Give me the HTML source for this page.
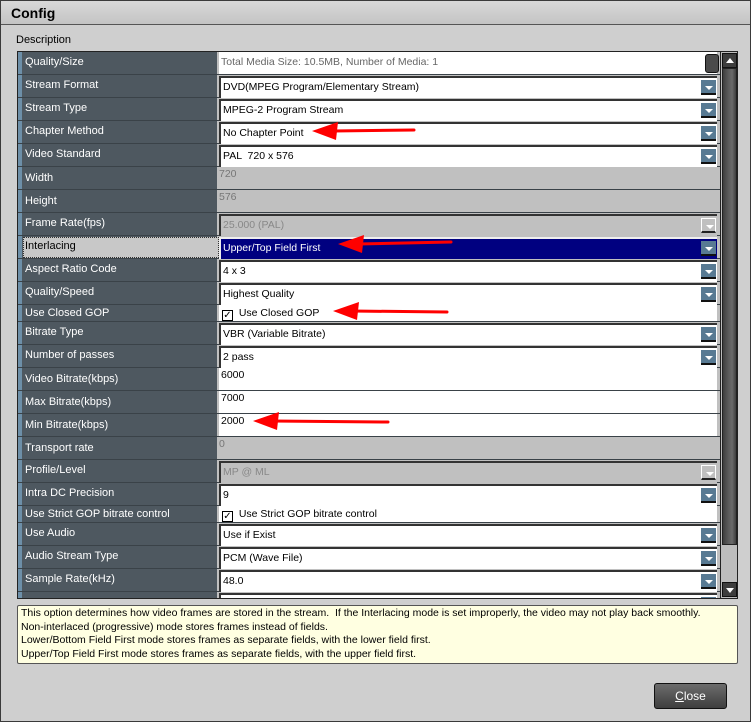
<!DOCTYPE html>
<html><head><meta charset="utf-8"><style>
*{margin:0;padding:0;box-sizing:border-box}
body{width:753px;height:724px;overflow:hidden;background:#fff;font-family:"Liberation Sans",Arial,sans-serif;font-size:10.5px;position:relative}
.win{position:absolute;left:0;top:0;width:751px;height:722px;background:#cfcfcf;border:1px solid #3a3a3a;}
.title{position:absolute;left:0;top:0;width:749px;height:24px;background:linear-gradient(#d8d8d8,#c4c4c4);border-bottom:1px solid #555;font-weight:bold;font-size:14px;padding:4px 10px}
.desc{position:absolute;left:15px;top:33px;font-size:11px}
.grid{position:absolute;left:16px;top:50px;width:721px;height:548px;background:#4e5860;border:1px solid #222;overflow:hidden}
.stripe{position:absolute;left:0;top:0;width:4px;height:548px;background:#6d8fa8}
.valcol{position:absolute;left:199px;top:0;width:503px;height:548px;background:#c0c0c0}
.r{position:absolute;left:0;width:702px;border-bottom:1px solid #3a4248}
.lab{position:absolute;left:7px;color:#fff;font-size:11px}
.v{position:absolute;left:201px;width:498px;background:#fff;border-top:2px solid #333;border-left:2px solid #333;font-size:10.5px;padding-left:2px;color:#000;white-space:nowrap}
.dd{position:absolute;right:1px;top:2px;width:15px;height:15px;background:#587a93;border-bottom:2px solid #111}
.dd:after{content:"";position:absolute;left:4px;top:6px;border-left:4px solid transparent;border-right:4px solid transparent;border-top:4px solid #fff}
.g .dd{background:#c0c0c0;border:1px solid #fff;border-bottom:2px solid #222}
.sb{position:absolute;left:702px;top:0;width:17px;height:548px;background:#bdbdbd;border-left:1px solid #222}
.thumb{position:absolute;left:1px;top:16px;width:15px;height:477px;background:linear-gradient(90deg,#3e3e3e,#5a5a5a 40%,#6a6a6a,#3e3e3e);border:1px solid #222}
.btn{position:absolute;left:1px;width:15px;height:15px;background:#3d3d3d;border:1px solid #111}
.info{position:absolute;left:16px;top:604px;width:721px;height:59px;background:#ffffe1;border:1px solid #555;border-radius:2px;padding:1px 3px;font-size:10.5px;line-height:13.5px}
.close{position:absolute;left:653px;top:682px;width:73px;height:26px;border:1px solid #111;border-radius:3px;background:linear-gradient(#6c6c6c,#3e3e3e);color:#fff;text-align:center;line-height:24px;font-size:12px}
.c{top:1px;height:22px;padding-top:3px}
</style></head><body>
<div class="win">
<div class="title">Config</div>
<div class="desc">Description</div>
<div class="grid">
<div class="valcol"></div>
<div class="stripe"></div>

<div class="r" style="top:0;height:23px"><span class="lab" style="top:4px">Quality/Size</span><div class="v" style="top:0;height:22px;border:0;color:#666;padding-top:4px">Total Media Size: 10.5MB, Number of Media: 1</div><div style="position:absolute;left:687px;top:2px;width:14px;height:19px;background:#4a4a4a;border:1px solid #111;border-radius:3px"></div></div>
<div class="r" style="top:23px;height:23px"><span class="lab" style="top:4px">Stream Format</span><div class="v c">DVD(MPEG Program/Elementary Stream)<div class="dd"></div></div></div>
<div class="r" style="top:46px;height:23px"><span class="lab" style="top:4px">Stream Type</span><div class="v c">MPEG-2 Program Stream<div class="dd"></div></div></div>
<div class="r" style="top:69px;height:23px"><span class="lab" style="top:4px">Chapter Method</span><div class="v c">No Chapter Point<div class="dd"></div></div></div>
<div class="r" style="top:92px;height:23px"><span class="lab" style="top:4px">Video Standard</span><div class="v c">PAL &nbsp;720 x 576<div class="dd"></div></div></div>
<div class="r" style="top:115px;height:23px"><span class="lab" style="top:5px">Width</span><span style="position:absolute;left:201px;top:1px;color:#777">720</span></div>
<div class="r" style="top:138px;height:23px"><span class="lab" style="top:5px">Height</span><span style="position:absolute;left:201px;top:1px;color:#777">576</span></div>
<div class="r g" style="top:161px;height:23px"><span class="lab" style="top:4px">Frame Rate(fps)</span><div class="v c" style="background:#c0c0c0;color:#888">25.000 (PAL)<div class="dd"></div></div></div>
<div class="r" style="top:184px;height:23px"><div style="position:absolute;left:5px;top:1px;width:196px;height:21px;background:#c8c8c8;border:1px dotted #333"></div><span class="lab" style="top:4px;color:#000">Interlacing</span><div class="v c" style="background:#000080;color:#fff;border-color:#eee">Upper/Top Field First<div class="dd"></div></div></div>
<div class="r" style="top:207px;height:23px"><span class="lab" style="top:4px">Aspect Ratio Code</span><div class="v c">4 x 3<div class="dd"></div></div></div>
<div class="r" style="top:230px;height:23px"><span class="lab" style="top:4px">Quality/Speed</span><div class="v c">Highest Quality<div class="dd"></div></div></div>
<div class="r" style="top:253px;height:17px"><span class="lab" style="top:2px">Use Closed GOP</span><div class="v" style="top:0;height:16px;border:0;padding-top:2px;padding-left:3px"><span style="display:inline-block;width:11px;height:11px;border:1px solid #000;font-size:10px;line-height:9px;text-align:center;vertical-align:-2px">✓</span>&nbsp;&nbsp;Use Closed GOP</div></div>
<div class="r" style="top:270px;height:23px"><span class="lab" style="top:4px">Bitrate Type</span><div class="v c">VBR (Variable Bitrate)<div class="dd"></div></div></div>
<div class="r" style="top:293px;height:23px"><span class="lab" style="top:4px">Number of passes</span><div class="v c">2 pass<div class="dd"></div></div></div>
<div class="r" style="top:316px;height:23px"><span class="lab" style="top:5px">Video Bitrate(kbps)</span><div class="v" style="top:0;height:22px;border:0;padding-top:1px">6000</div></div>
<div class="r" style="top:339px;height:23px"><span class="lab" style="top:5px">Max Bitrate(kbps)</span><div class="v" style="top:0;height:22px;border:0;padding-top:1px">7000</div></div>
<div class="r" style="top:362px;height:23px"><span class="lab" style="top:5px">Min Bitrate(kbps)</span><div class="v" style="top:0;height:22px;border:0;padding-top:1px">2000</div></div>
<div class="r" style="top:385px;height:23px"><span class="lab" style="top:5px">Transport rate</span><span style="position:absolute;left:201px;top:1px;color:#777">0</span></div>
<div class="r g" style="top:408px;height:23px"><span class="lab" style="top:4px">Profile/Level</span><div class="v c" style="background:#c0c0c0;color:#888">MP @ ML<div class="dd"></div></div></div>
<div class="r" style="top:431px;height:23px"><span class="lab" style="top:4px">Intra DC Precision</span><div class="v c">9<div class="dd"></div></div></div>
<div class="r" style="top:454px;height:17px"><span class="lab" style="top:2px">Use Strict GOP bitrate control</span><div class="v" style="top:0;height:16px;border:0;padding-top:2px;padding-left:3px"><span style="display:inline-block;width:11px;height:11px;border:1px solid #000;font-size:10px;line-height:9px;text-align:center;vertical-align:-2px">✓</span>&nbsp;&nbsp;Use Strict GOP bitrate control</div></div>
<div class="r" style="top:471px;height:23px"><span class="lab" style="top:4px">Use Audio</span><div class="v c">Use if Exist<div class="dd"></div></div></div>
<div class="r" style="top:494px;height:23px"><span class="lab" style="top:4px">Audio Stream Type</span><div class="v c">PCM (Wave File)<div class="dd"></div></div></div>
<div class="r" style="top:517px;height:23px"><span class="lab" style="top:4px">Sample Rate(kHz)</span><div class="v c">48.0<div class="dd"></div></div></div>
<div class="r" style="top:540px;height:23px"><div class="v c"><div class="dd"></div></div></div>

<div class="sb"><div class="btn" style="top:1px"><div style="position:absolute;left:3px;top:4px;border-left:4px solid transparent;border-right:4px solid transparent;border-bottom:5px solid #fff"></div></div><div class="thumb"></div><div class="btn" style="top:530px"><div style="position:absolute;left:3px;top:5px;border-left:4px solid transparent;border-right:4px solid transparent;border-top:5px solid #fff"></div></div></div>
</div>

<div class="info">This option determines how video frames are stored in the stream.&nbsp; If the Interlacing mode is set improperly, the video may not play back smoothly.<br>Non-interlaced (progressive) mode stores frames instead of fields.<br>Lower/Bottom Field First mode stores frames as separate fields, with the lower field first.<br>Upper/Top Field First mode stores frames as separate fields, with the upper field first.</div>
<div class="close"><u>C</u>lose</div>
</div>
<svg width="753" height="724" style="position:absolute;left:0;top:0" viewBox="0 0 753 724">
<g fill="#f00" stroke="#f00" stroke-linecap="round">
<line x1="333" y1="131" x2="414" y2="130" stroke-width="3"/><polygon points="312,131 338,122 336,140" stroke="none"/>
<line x1="358" y1="244" x2="451" y2="242" stroke-width="3"/><polygon points="338,244 364,235 362,253" stroke="none"/>
<line x1="352" y1="311" x2="447" y2="312" stroke-width="3"/><polygon points="333,311 359,302 357,320" stroke="none"/>
<line x1="272" y1="421" x2="388" y2="422" stroke-width="3"/><polygon points="253,421 279,412 277,430" stroke="none"/>
</g></svg>
</body></html>
